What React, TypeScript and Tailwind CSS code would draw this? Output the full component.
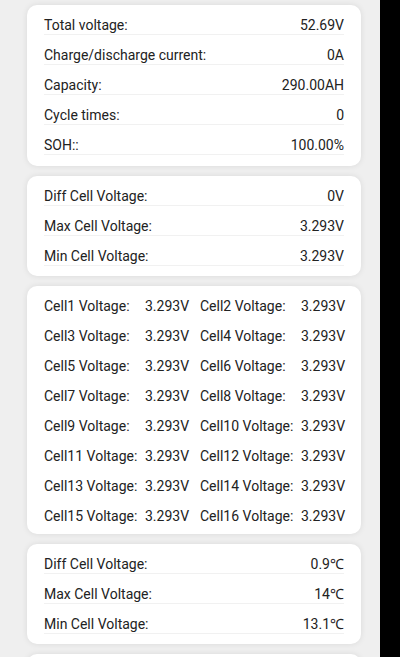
import React from 'react'

type Row = { label: string; value: string }

const summary: Row[] = [
  { label: 'Total voltage:', value: '52.69V' },
  { label: 'Charge/discharge current:', value: '0A' },
  { label: 'Capacity:', value: '290.00AH' },
  { label: 'Cycle times:', value: '0' },
  { label: 'SOH::', value: '100.00%' },
]

const voltage: Row[] = [
  { label: 'Diff Cell Voltage:', value: '0V' },
  { label: 'Max Cell Voltage:', value: '3.293V' },
  { label: 'Min Cell Voltage:', value: '3.293V' },
]

const temps: Row[] = [
  { label: 'Diff Cell Voltage:', value: '0.9℃' },
  { label: 'Max Cell Voltage:', value: '14℃' },
  { label: 'Min Cell Voltage:', value: '13.1℃' },
]

const cells = Array.from({ length: 16 }, (_, i) => ({
  label: `Cell${i + 1} Voltage:`,
  value: '3.293V',
}))

const Card = ({ children, pad = 'pb-[10px]' }: { children: React.ReactNode; pad?: string }) => (
  <div className={`bg-white rounded-[10px] px-[17px] shadow-[0_0_6px_rgba(0,0,0,0.09)] ${pad}`}>
    {children}
  </div>
)

const InfoList = ({ rows, pad }: { rows: Row[]; pad?: string }) => (
  <Card pad={pad}>
    {rows.map((r) => (
      <div
        key={r.label + r.value}
        className="flex justify-between h-[30px] pt-[12px] leading-[16px] border-b border-[#f1f1f1]"
      >
        <span>{r.label}</span>
        <span>{r.value}</span>
      </div>
    ))}
  </Card>
)

export default function App() {
  return (
    <div
      className="flex w-[400px] h-[657px] overflow-hidden text-[14px] text-[#222]"
      style={{ fontFamily: 'Roboto, "Liberation Sans", sans-serif' }}
    >
      <div className="w-[380px] bg-[#efefef] pt-[5px] pl-[27px] pr-[19px] flex flex-col gap-[10px]">
        <InfoList rows={summary} pad="pb-[11px]" />
        <InfoList rows={voltage} />
        <Card pad="pb-[8px]">
          <div className="grid grid-cols-[156px_1fr]">
            {cells.map((c) => (
              <div key={c.label} className="flex h-[30px] pt-[12px] leading-[16px]">
                <span className="w-[101px] shrink-0">{c.label}</span>
                <span>{c.value}</span>
              </div>
            ))}
          </div>
        </Card>
        <InfoList rows={temps} />
        <Card>
          <div className="h-[40px]" />
        </Card>
      </div>
      <div className="w-[20px] bg-black" />
    </div>
  )
}
